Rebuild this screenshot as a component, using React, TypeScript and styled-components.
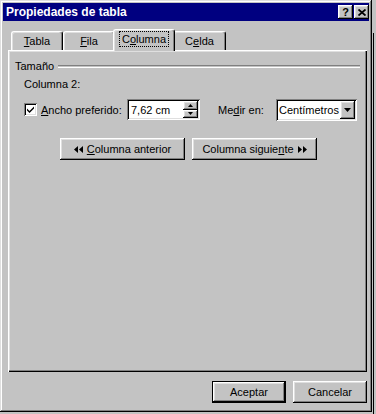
import React from "react";
import styled, { createGlobalStyle, css } from "styled-components";

const Global = createGlobalStyle`
  html, body { margin: 0; padding: 0; }
  body {
    width: 376px;
    height: 414px;
    overflow: hidden;
    background:
      linear-gradient(#000, #000) 373px 33px / 1px 381px no-repeat,
      #c3c3c3;
    font-family: "Liberation Sans", Arial, sans-serif;
    font-size: 11px;
    color: #000;
  }
`;

const FACE = "#c3c3c3";

const raised = css`
  box-shadow: inset -1px -1px #000, inset 1px 1px #fff, inset -2px -2px #808080,
    inset 2px 2px #dfdfdf;
`;

const sunken = css`
  box-shadow: inset 1px 1px #808080, inset -1px -1px #fff, inset 2px 2px #000,
    inset -2px -2px #dfdfdf;
`;

const Window = styled.div`
  width: 372px;
  height: 412px;
  box-sizing: border-box;
  padding: 3px;
  background: ${FACE};
  box-shadow: inset -1px -1px #000, inset 1px 1px #dfdfdf, inset -2px -2px #808080,
    inset 2px 2px #fff;
  display: flex;
  flex-direction: column;
`;

const TitleBar = styled.div`
  height: 18px;
  background: #000080;
  display: flex;
  align-items: center;
  padding: 0 0 0 3px;
`;

const Title = styled.div`
  flex: 1;
  color: #fff;
  font-weight: bold;
  font-size: 12px;
  line-height: 18px;
  white-space: nowrap;
`;

const CaptionButtons = styled.div`
  display: flex;
  gap: 1px;
`;

const CaptionButton = styled.div`
  width: 15px;
  height: 14px;
  background: ${FACE};
  ${raised};
  display: flex;
  align-items: center;
  justify-content: center;
  font-weight: bold;
  font-size: 11px;
  line-height: 14px;
`;

const Body = styled.div`
  display: flex;
  flex-direction: column;
  padding: 8px 2px 0 5px;
`;

const TabStrip = styled.div`
  height: 21px;
  display: flex;
  align-items: flex-end;
  padding-left: 3px;
`;

const Tab = styled.div<{ $w: number; $active?: boolean }>`
  box-sizing: border-box;
  width: ${(p) => p.$w}px;
  height: 19px;
  background: ${FACE};
  border-top: 1px solid #fff;
  border-left: 1px solid #fff;
  border-right: 1px solid #000;
  border-radius: 3px 3px 0 0;
  box-shadow: inset -1px 0 #808080, inset 1px 1px #dfdfdf;
  display: flex;
  align-items: center;
  justify-content: center;
  padding-bottom: 1px;
  position: relative;
  ${(p) =>
    p.$active &&
    css`
      width: ${p.$w + 4}px;
      height: 22px;
      margin: 0 -2px -1px;
      z-index: 1;
      padding-bottom: 3px;
    `}
`;

const Focus = styled.span`
  outline: 1px dotted #000;
  outline-offset: 1px;
  padding: 0 1px;
`;

const Panel = styled.div`
  height: 322px;
  box-sizing: border-box;
  background: ${FACE};
  box-shadow: inset 1px 1px #fff, inset -1px -1px #000, inset -2px -2px #808080,
    inset 2px 2px #dfdfdf;
  padding: 9px 7px 0 7px;
  display: flex;
  flex-direction: column;
`;

const GroupHeader = styled.div`
  display: flex;
  align-items: center;
  gap: 4px;
  height: 14px;
  padding-right: 0;
`;

const EtchedLine = styled.div`
  flex: 1;
  height: 1px;
  border-top: 1px solid #808080;
  border-bottom: 1px solid #fff;
  margin-right: 0;
`;

const Indent = styled.div`
  padding-left: 9px;
  display: flex;
  flex-direction: column;
`;

const Label = styled.div`
  height: 14px;
  line-height: 14px;
  margin-top: 4px;
`;

const FieldRow = styled.div`
  display: flex;
  align-items: center;
  height: 23px;
  margin-top: 7px;
`;

const CheckBox = styled.div`
  width: 13px;
  height: 13px;
  box-sizing: border-box;
  background: #fff;
  ${sunken};
  display: flex;
  align-items: center;
  justify-content: center;
  margin-right: 4px;
`;

const InlineLabel = styled.span<{ $w?: number }>`
  display: inline-block;
  width: ${(p) => (p.$w ? `${p.$w}px` : "auto")};
  white-space: nowrap;
`;

const SpinField = styled.div`
  width: 73px;
  height: 21px;
  box-sizing: border-box;
  background: #fff;
  ${sunken};
  display: flex;
  align-items: center;
  padding: 2px 2px 2px 4px;
`;

const FieldText = styled.span`
  flex: 1;
  white-space: nowrap;
`;

const SpinButtons = styled.div`
  display: flex;
  flex-direction: column;
  width: 15px;
  height: 17px;
`;

const SpinButton = styled.div`
  flex: 1;
  background: ${FACE};
  ${raised};
  display: flex;
  align-items: center;
  justify-content: center;
`;

const Select = styled.div`
  width: 81px;
  height: 22px;
  box-sizing: border-box;
  background: #fff;
  ${sunken};
  display: flex;
  align-items: center;
  padding: 2px 2px 2px 3px;
  margin-left: 2px;
`;

const DropButton = styled.div`
  width: 15px;
  height: 18px;
  background: ${FACE};
  ${raised};
  display: flex;
  align-items: center;
  justify-content: center;
`;

const NavRow = styled.div`
  display: flex;
  gap: 7px;
  padding-left: 45px;
  margin-top: 17px;
`;

const Button = styled.div<{ $w: number; $default?: boolean }>`
  width: ${(p) => p.$w}px;
  height: 22px;
  box-sizing: border-box;
  background: ${FACE};
  ${raised};
  display: flex;
  align-items: center;
  justify-content: center;
  gap: 4px;
  white-space: nowrap;
  ${(p) =>
    p.$default &&
    css`
      box-shadow: inset 0 0 0 1px #000, inset -2px -2px #000, inset 2px 2px #fff,
        inset -3px -3px #808080, inset 3px 3px #dfdfdf;
    `}
`;

const Footer = styled.div`
  display: flex;
  justify-content: flex-end;
  gap: 7px;
  margin-top: 9px;
`;

const U = styled.span`
  text-decoration: underline;
  text-underline-offset: 1px;
`;

const Arrows = ({ dir }: { dir: "left" | "right" }) => (
  <svg width="9" height="7" viewBox="0 0 9 7">
    {dir === "left" ? (
      <path d="M0 3.5 L4 0 V7 Z M5 3.5 L9 0 V7 Z" fill="#000" />
    ) : (
      <path d="M0 0 L4 3.5 L0 7 Z M5 0 L9 3.5 L5 7 Z" fill="#000" />
    )}
  </svg>
);

const Tri = ({ up }: { up?: boolean }) => (
  <svg width="5" height="3" viewBox="0 0 5 3">
    <path d={up ? "M2.5 0 L5 3 H0 Z" : "M0 0 H5 L2.5 3 Z"} fill="#000" />
  </svg>
);

export default function App() {
  return (
    <>
      <Global />
      <Window>
        <TitleBar>
          <Title>Propiedades de tabla</Title>
          <CaptionButtons>
            <CaptionButton>?</CaptionButton>
            <CaptionButton>
              <svg width="8" height="7" viewBox="0 0 8 7">
                <path d="M0.5 0.5 L7.5 6.5 M7.5 0.5 L0.5 6.5" stroke="#000" strokeWidth="1.8" />
              </svg>
            </CaptionButton>
          </CaptionButtons>
        </TitleBar>
        <Body>
          <TabStrip>
            <Tab $w={52}>
              <span>
                <U>T</U>abla
              </span>
            </Tab>
            <Tab $w={52}>
              <span>
                <U>F</U>ila
              </span>
            </Tab>
            <Tab $w={58} $active>
              <Focus>
                C<U>o</U>lumna
              </Focus>
            </Tab>
            <Tab $w={53}>
              <span>
                C<U>e</U>lda
              </span>
            </Tab>
          </TabStrip>
          <Panel>
            <GroupHeader>
              <span>Tamaño</span>
              <EtchedLine />
            </GroupHeader>
            <Indent>
              <Label>Columna 2:</Label>
              <FieldRow>
                <CheckBox>
                  <svg width="7" height="7" viewBox="0 0 7 7">
                    <path d="M0 2.5 L2.5 5 L7 0.5 V2.5 L2.5 7 L0 4.5 Z" fill="#000" />
                  </svg>
                </CheckBox>
                <InlineLabel $w={86}>
                  <U>A</U>ncho preferido:
                </InlineLabel>
                <SpinField>
                  <FieldText>7,62 cm</FieldText>
                  <SpinButtons>
                    <SpinButton>
                      <Tri up />
                    </SpinButton>
                    <SpinButton>
                      <Tri />
                    </SpinButton>
                  </SpinButtons>
                </SpinField>
                <InlineLabel $w={56} style={{ marginLeft: 18 }}>
                  Me<U>d</U>ir en:
                </InlineLabel>
                <Select>
                  <FieldText>Centímetros</FieldText>
                  <DropButton>
                    <svg width="7" height="4" viewBox="0 0 7 4">
                      <path d="M0 0 H7 L3.5 4 Z" fill="#000" />
                    </svg>
                  </DropButton>
                </Select>
              </FieldRow>
            </Indent>
            <NavRow>
              <Button $w={125}>
                <Arrows dir="left" />
                <span>
                  <U>C</U>olumna anterior
                </span>
              </Button>
              <Button $w={125}>
                <span>
                  Columna siguie<U>n</U>te
                </span>
                <Arrows dir="right" />
              </Button>
            </NavRow>
          </Panel>
          <Footer>
            <Button $w={74} $default>
              Aceptar
            </Button>
            <Button $w={74}>Cancelar</Button>
          </Footer>
        </Body>
      </Window>
    </>
  );
}
